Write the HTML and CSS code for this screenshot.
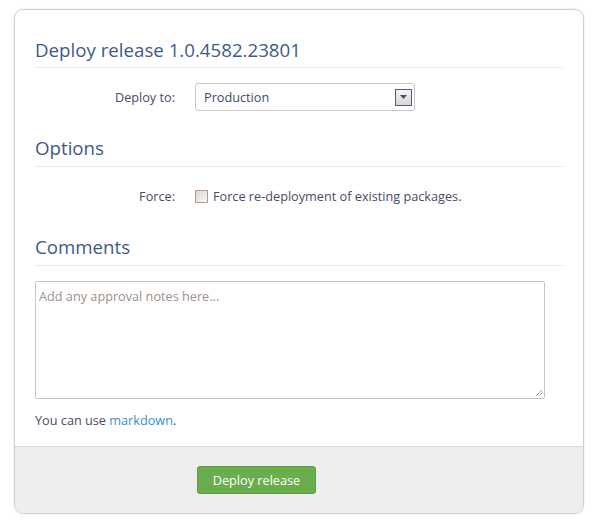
FILE: index.html
```html
<!DOCTYPE html>
<html>
<head>
<meta charset="utf-8">
<link rel="stylesheet" href="styles.css">
</head>
<body>
<div class="card">
  <div class="body">
    <h2 class="heading first">Deploy release 1.0.4582.23801</h2>
    <div class="row">
      <label class="label">Deploy to:</label>
      <div class="select">
        <span>Production</span>
        <span class="arrow"><svg width="9" height="5" viewBox="0 0 9 5"><path d="M1 0h7L4.5 4z" fill="#4a4a6a"/></svg></span>
      </div>
    </div>
    <h2 class="heading">Options</h2>
    <div class="row check-row">
      <label class="label">Force:</label>
      <span class="checkbox"></span>
      <span class="check-text">Force re-deployment of existing packages.</span>
    </div>
    <h2 class="heading">Comments</h2>
    <div class="textarea">Add any approval notes here...
      <svg class="grip" width="8" height="8" viewBox="0 0 8 8"><path d="M7 1L1 7M7 4L4 7" stroke="#555" stroke-width="1" stroke-dasharray="1 1"/></svg>
    </div>
    <p class="hint">You can use <a href="#">markdown</a>.</p>
  </div>
  <div class="footer">
    <button class="btn">Deploy release</button>
  </div>
</div>
</body>
</html>
```
FILE: styles.css
```css
* { box-sizing: border-box; }
body {
  margin: 0;
  padding: 9px 10px 0 14px;
  background: #fff;
  font-family: "Open Sans", "Noto Sans", sans-serif;
  font-size: 12.7px;
  color: #4a4a68;
}
.card {
  width: 570px;
  height: 505px;
  border: 1px solid #cfcfcf;
  border-radius: 9px;
  box-shadow: 0 0 2px rgba(0,0,0,0.12);
  display: flex;
  flex-direction: column;
  overflow: hidden;
}
.body {
  padding: 0 20px 0 20px;
  flex: 1;
}
.heading {
  margin: 0;
  font-weight: 400;
  font-size: 18.7px;
  color: #3f5a86;
  border-bottom: 1px solid #e8e8e8;
  padding-bottom: 6px;
  line-height: 24px;
  margin-top: 25px;
  margin-bottom: 15px;
}
.heading.first { margin-top: 28px; padding-bottom: 5px; }
.row {
  display: flex;
  align-items: center;
  height: 28px;
}
.label {
  width: 160px;
  text-align: right;
  padding-right: 20px;
}
.select {
  width: 220px;
  height: 28px;
  border: 1px solid #c8c8c8;
  border-radius: 3px;
  display: flex;
  align-items: center;
  justify-content: space-between;
  padding: 0 2px 0 8px;
  color: #3d4a6c;
}
.arrow {
  width: 17px;
  height: 17px;
  border: 1px solid #5a5a78;
  background: linear-gradient(#f4f4f4, #d6d6d6);
  display: flex;
  align-items: center;
  justify-content: center;
}
.checkbox {
  width: 13px;
  height: 13px;
  border: 1px solid #b89a84;
  background: linear-gradient(135deg, #d8d8d8, #f8f8f8);
  margin-right: 5px;
}
.check-text { color: #4a4a68; }
.textarea {
  position: relative;
  width: 510px;
  height: 118px;
  border: 1px solid #c4c4c4;
  border-radius: 2px;
  padding: 5px 3px;
  color: #a09088;
}
.grip { position: absolute; right: 1px; bottom: 1px; }
.hint { margin: 12px 0 0; }
.hint a { color: #3a8fd0; text-decoration: none; }
.footer {
  height: 67px;
  background: #eeeeec;
  border-top: 1px dotted #c8c8c8;
  padding: 19px 0 0 182px;
}
.btn {
  width: 119px;
  height: 28px;
  background: #6aad4c;
  border: 1px solid #5a9e3f;
  border-radius: 3px;
  color: #fff;
  font-family: inherit;
  font-size: 12.7px;
}
```
